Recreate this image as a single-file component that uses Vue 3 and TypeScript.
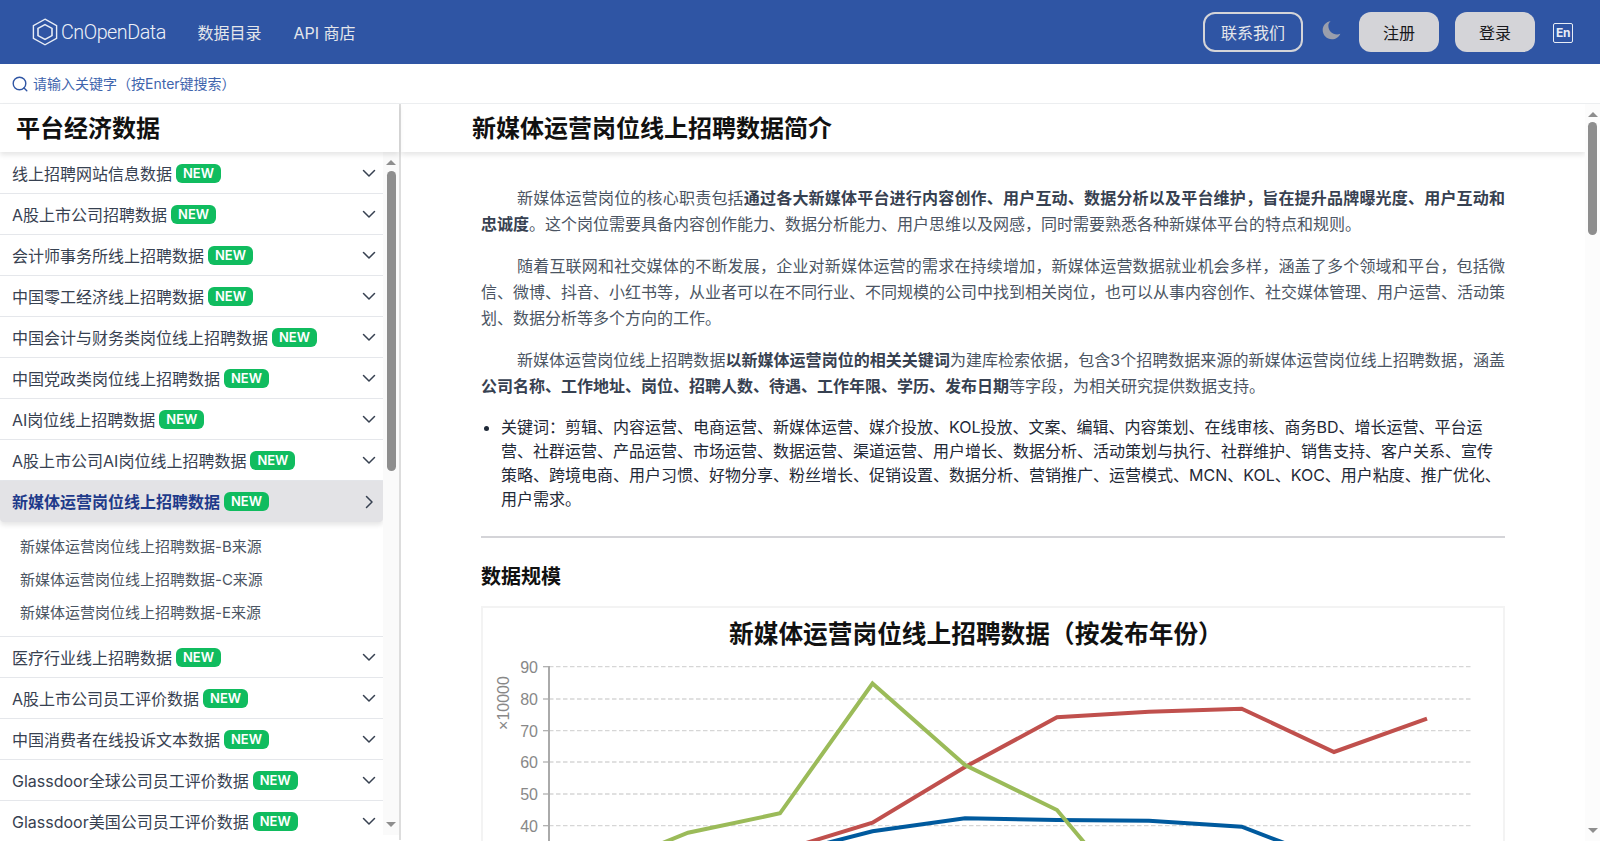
<template>
  <div class="page">
    <header class="topbar">
      <div class="logo">
        <svg width="26" height="28" viewBox="0 0 26 28" fill="none" stroke="#e8edf6">
          <path d="M13 1.2 24.6 7.6v12.8L13 26.8 1.4 20.4V7.6z" stroke-width="1.4" />
          <path d="M13 6.6 20 10.4v7.2l-7 3.8-7-3.8v-7.2z" stroke-width="1.6" />
        </svg>
        <span class="logo-text">CnOpenData</span>
      </div>
      <nav class="nav">
        <a>数据目录</a>
        <a>API 商店</a>
      </nav>
      <div class="actions">
        <button class="btn-outline">联系我们</button>
        <svg class="moon" width="21" height="21" viewBox="0 0 20 20">
          <path d="M9.2 1C5 1.6 1.6 5.100 1.600 9.600c0 4.900 3.900 8.800 8.800 8.800 3.600 0 6.700-2.200 8-5.300-1 .4-2 .6-3.100.6-4.600 0-8.300-3.700-8.300-8.300 0-1.600.8-3.200 2.200-4.400z" fill="#9a9eac" />
        </svg>
        <button class="btn-gray">注册</button>
        <button class="btn-gray">登录</button>
        <span class="lang">En</span>
      </div>
    </header>

    <div class="searchbar">
      <svg width="16" height="16" viewBox="0 0 16 16" fill="none" stroke="#2f55a4" stroke-width="1.400">
        <circle cx="7.500" cy="7.500" r="6.300" />
        <path d="m12 12 2.800 2.800" stroke-linecap="round" />
      </svg>
      <span class="search-text">请输入关键字（按Enter键搜索）</span>
    </div>

    <div class="content">
      <aside class="sidebar">
        <h2 class="side-title">平台经济数据</h2>
        <div class="side-body">
          <ul class="menu">
            <li v-for="item in menu" :key="item.label" class="menu-group">
              <div class="menu-row" :class="{ active: item.subs }">
                <span class="menu-label">{{ item.label }}</span>
                <span class="badge">NEW</span>
                <svg class="chevron" width="14" height="14" viewBox="0 0 14 14" fill="none" stroke="#374151" stroke-width="1.500" stroke-linecap="round" stroke-linejoin="round">
                  <path v-if="item.subs" d="m4.500 1.500 5.500 5.500-5.500 5.500" />
                  <path v-else d="m1.500 4.500 5.500 5.500 5.500-5.500" />
                </svg>
              </div>
              <div v-if="item.subs" class="submenu">
                <a v-for="sub in item.subs" :key="sub">{{ sub }}</a>
              </div>
            </li>
          </ul>
          <div class="fake-scroll">
            <i class="arrow up"></i>
            <div class="thumb side-thumb"></div>
            <i class="arrow down"></i>
          </div>
        </div>
      </aside>

      <main class="main">
        <div class="main-inner">
          <h1 class="main-title">新媒体运营岗位线上招聘数据简介</h1>
          <article class="article">
            <p>新媒体运营岗位的核心职责包括<b>通过各大新媒体平台进行内容创作、用户互动、数据分析以及平台维护，旨在提升品牌曝光度、用户互动和忠诚度</b>。这个岗位需要具备内容创作能力、数据分析能力、用户思维以及网感，同时需要熟悉各种新媒体平台的特点和规则。</p>
            <p>随着互联网和社交媒体的不断发展，企业对新媒体运营的需求在持续增加，新媒体运营数据就业机会多样，涵盖了多个领域和平台，包括微信、微博、抖音、小红书等，从业者可以在不同行业、不同规模的公司中找到相关岗位，也可以从事内容创作、社交媒体管理、用户运营、活动策划、数据分析等多个方向的工作。</p>
            <p>新媒体运营岗位线上招聘数据<b>以新媒体运营岗位的相关关键词</b>为建库检索依据，包含3个招聘数据来源的新媒体运营岗位线上招聘数据，涵盖<b>公司名称、工作地址、岗位、招聘人数、待遇、工作年限、学历、发布日期</b>等字段，为相关研究提供数据支持。</p>
            <ul class="keywords">
              <li>关键词：剪辑、内容运营、电商运营、新媒体运营、媒介投放、KOL投放、文案、编辑、内容策划、在线审核、商务BD、增长运营、平台运营、社群运营、产品运营、市场运营、数据运营、渠道运营、用户增长、数据分析、活动策划与执行、社群维护、销售支持、客户关系、宣传策略、跨境电商、用户习惯、好物分享、粉丝增长、促销设置、数据分析、营销推广、运营模式、MCN、KOL、KOC、用户粘度、推广优化、用户需求。</li>
            </ul>
            <hr />
            <h3>数据规模</h3>
            <div class="chart-box">
              <svg width="1020" height="300" viewBox="483 608 1020 300">
                <text x="729" y="643" class="chart-title">新媒体运营岗位线上招聘数据（按发布年份）</text>
                <text transform="translate(509 703) rotate(-90)" class="axis-label" text-anchor="middle">×10000</text>
                <g v-for="t in ticks" :key="t.label">
                  <line x1="549" :x2="t.x2" :y1="t.y" :y2="t.y" stroke="#d6d6d6" stroke-width="1.300" stroke-dasharray="4.500 2.500" />
                  <line x1="543" x2="549" :y1="t.y" :y2="t.y" stroke="#aaa" stroke-width="1.200" />
                  <text x="538" :y="t.y + 6" class="axis-label" text-anchor="end">{{ t.label }}</text>
                </g>
                <line x1="549" x2="549" y1="666" y2="908" stroke="#aaa" stroke-width="2" />
                <polyline v-for="s in series" :key="s.color" :points="s.points" :stroke="s.color" fill="none" stroke-width="4" stroke-linejoin="miter" />
              </svg>
            </div>
          </article>
        </div>
        <div class="fake-scroll main-scroll">
          <i class="arrow up"></i>
          <div class="thumb main-thumb"></div>
          <i class="arrow down"></i>
        </div>
      </main>
    </div>
  </div>
</template>

<script setup lang="ts">
interface MenuItem {
  label: string;
  subs?: string[];
}

const menu: MenuItem[] = [
  { label: '线上招聘网站信息数据' },
  { label: 'A股上市公司招聘数据' },
  { label: '会计师事务所线上招聘数据' },
  { label: '中国零工经济线上招聘数据' },
  { label: '中国会计与财务类岗位线上招聘数据' },
  { label: '中国党政类岗位线上招聘数据' },
  { label: 'AI岗位线上招聘数据' },
  { label: 'A股上市公司AI岗位线上招聘数据' },
  {
    label: '新媒体运营岗位线上招聘数据',
    subs: ['新媒体运营岗位线上招聘数据-B来源', '新媒体运营岗位线上招聘数据-C来源', '新媒体运营岗位线上招聘数据-E来源'],
  },
  { label: '医疗行业线上招聘数据' },
  { label: 'A股上市公司员工评价数据' },
  { label: '中国消费者在线投诉文本数据' },
  { label: 'Glassdoor全球公司员工评价数据' },
  { label: 'Glassdoor美国公司员工评价数据' },
];

const ticks = [
  { label: '90', y: 666.700, x2: 1473 },
  { label: '80', y: 699, x2: 1473 },
  { label: '70', y: 730.700, x2: 1473 },
  { label: '60', y: 762, x2: 1471 },
  { label: '50', y: 794, x2: 1473 },
  { label: '40', y: 825.700, x2: 1473 },
];

// 折线坐标直接按图上的位置写
const series = [
  { color: '#005a9e', points: '780,855 872.500,831.300 965,818.300 1057,820 1149,820.700 1241.700,826.700 1334,862' },
  { color: '#c0504d', points: '780,851 872.500,822.700 965,767 1057,717.300 1149,711.700 1241.700,708.700 1334,752 1427,718.700' },
  { color: '#9bbb59', points: '596,870 688,832.700 780,813.300 872.500,683.500 965,765 1057,810 1149,920' },
];
</script>

<style>
html, body {
  margin: 0;
  height: 100%;
  overflow: hidden;
  background: #fff;
}
</style>

<style scoped>
.page {
  height: 841px;
  display: flex;
  flex-direction: column;
  font-family: Inter, "Noto Sans CJK SC", sans-serif;
  color: #374151;
  overflow: hidden;
}

.topbar {
  height: 64px;
  flex: none;
  background: #2f55a4;
  display: flex;
  align-items: center;
  padding: 0 27px 0 32px;
  color: #e5e7eb;
}

.logo {
  display: flex;
  align-items: center;
  gap: 3px;
}

.logo-text {
  font-family: Roboto, sans-serif;
  font-size: 21px;
  font-weight: 300;
  letter-spacing: -0.5px;
  color: #eef1f8;
  transform: scaleX(0.94);
  transform-origin: left center;
  margin-right: -7px;
}

.nav {
  display: flex;
  gap: 32px;
  margin-left: 32px;
  font-size: 16px;
}

.actions {
  margin-left: auto;
  display: flex;
  align-items: center;
}

.actions button {
  font-family: inherit;
  font-size: 16px;
  height: 40px;
  border-radius: 12px;
  cursor: pointer;
}

.btn-outline {
  width: 100px;
  background: transparent;
  border: 2px solid #d4d4d8;
  color: #e5e7eb;
}

.moon {
  margin: 0 17px 4px 18px;
}

.btn-gray {
  width: 80px;
  background: #d4d4d8;
  border: none;
  color: #18181b;
  margin-right: 16px;
}

.lang {
  box-sizing: border-box;
  width: 20px;
  height: 20px;
  margin: 2px 0 0 2px;
  border: 1.500px solid #e8edf6;
  border-radius: 2px;
  font-size: 12px;
  font-weight: 700;
  letter-spacing: -0.5px;
  line-height: 17px;
  text-align: center;
  color: #e8edf6;
}

.searchbar {
  height: 40px;
  flex: none;
  box-sizing: border-box;
  display: flex;
  align-items: center;
  gap: 5px;
  padding-left: 12px;
  font-size: 14px;
  color: #3f65ad;
  border-bottom: 1px solid #eceef0;
}

.search-text {
  margin-bottom: 2px;
}

.content {
  flex: 1;
  min-height: 0;
  display: flex;
}

.sidebar {
  width: 401px;
  height: 736px;
  flex: none;
  box-sizing: border-box;
  border-right: 2px solid #ddd;
  display: flex;
  flex-direction: column;
}

.side-title {
  height: 48px;
  flex: none;
  box-sizing: border-box;
  margin: 0;
  padding: 2px 0 0 16px;
  font-size: 24px;
  font-weight: 700;
  line-height: 46px;
  color: #111;
  box-shadow: 0 3px 5px rgba(0, 0, 0, 0.1);
  position: relative;
  z-index: 2;
}

.side-body {
  height: 683px;
  display: flex;
  overflow: hidden;
}

.menu {
  flex: 1;
  margin: 0;
  padding: 1px 0 0;
  list-style: none;
  overflow: hidden;
}

.menu-group {
  border-bottom: 1px solid #e5e7eb;
}

.menu-row {
  height: 40px;
  display: flex;
  align-items: center;
  padding: 0 12px;
  font-size: 16px;
  position: relative;
}

.menu-label {
  margin-bottom: 1px;
}

.menu-row.active {
  background: #e3e3e6;
  font-weight: 600;
  color: #1e3a8a;
  border-bottom-left-radius: 4px;
  border-bottom-right-radius: 4px;
  box-shadow: 0 3px 5px rgba(0, 0, 0, 0.1);
  height: 41px;
}

.badge {
  margin-left: 4px;
  width: 45px;
  height: 19px;
  border-radius: 6px;
  background: #10bc5f;
  color: #fff;
  font-size: 13px;
  font-weight: 600;
  line-height: 19px;
  text-align: center;
}

.chevron {
  margin-left: auto;
  margin-right: -5px;
}

.submenu {
  display: flex;
  flex-direction: column;
  padding: 7.500px 20px;
  font-size: 15px;
  line-height: 33px;
  color: #4b5563;
}

.fake-scroll {
  width: 16px;
  flex: none;
  background: #fafafa;
  display: flex;
  flex-direction: column;
  align-items: center;
}

.arrow {
  width: 0;
  height: 0;
  border-left: 5px solid transparent;
  border-right: 5px solid transparent;
  flex: none;
}

.arrow.up {
  border-bottom: 5px solid #8e8e8e;
  margin-top: 8px;
}

.arrow.down {
  border-top: 5px solid #8e8e8e;
  margin-top: auto;
  margin-bottom: 8px;
}

.thumb {
  width: 9px;
  border-radius: 5px;
  background: #8e8e8e;
}

.side-thumb {
  margin-top: 6px;
  height: 300px;
}

.main {
  flex: 1;
  min-width: 0;
  display: flex;
}

.main-inner {
  flex: 1;
  min-width: 0;
  overflow: hidden;
}

.main-scroll {
  width: 15px;
  background: #fcfcfc;
}

.main-thumb {
  margin-top: 5px;
  height: 113px;
}

.main-title {
  height: 48px;
  box-sizing: border-box;
  margin: 0;
  padding: 2px 0 0 71px;
  font-size: 24px;
  font-weight: 700;
  line-height: 46px;
  color: #111;
  box-shadow: 0 3px 5px rgba(0, 0, 0, 0.1);
}

.article {
  width: 1024px;
  margin: 0 auto;
  padding-top: 33px;
  font-size: 16px;
  line-height: 26px;
  color: #4b5563;
}

.article p {
  margin: 0 0 16px;
  text-indent: 36px;
  text-align: justify;
}

.article b {
  font-weight: 600;
  color: #374151;
}

.keywords {
  margin: 1px 0 0;
  padding-left: 20px;
  line-height: 24px;
  color: #1f2937;
}

.article hr {
  margin: 25px 0 0;
  border: none;
  border-top: 2px solid #d4d4d8;
}

.article h3 {
  margin: 24px 0 14px;
  font-size: 20px;
  font-weight: 600;
  line-height: 30px;
  color: #111;
}

.chart-box {
  border: 2px solid #f3f3f3;
  box-sizing: border-box;
  height: 320px;
}

.chart-title {
  font-size: 24.700px;
  font-weight: 700;
  fill: #111;
}

.axis-label {
  font-family: "Liberation Sans", sans-serif;
  font-size: 16px;
  fill: #888;
}
</style>
